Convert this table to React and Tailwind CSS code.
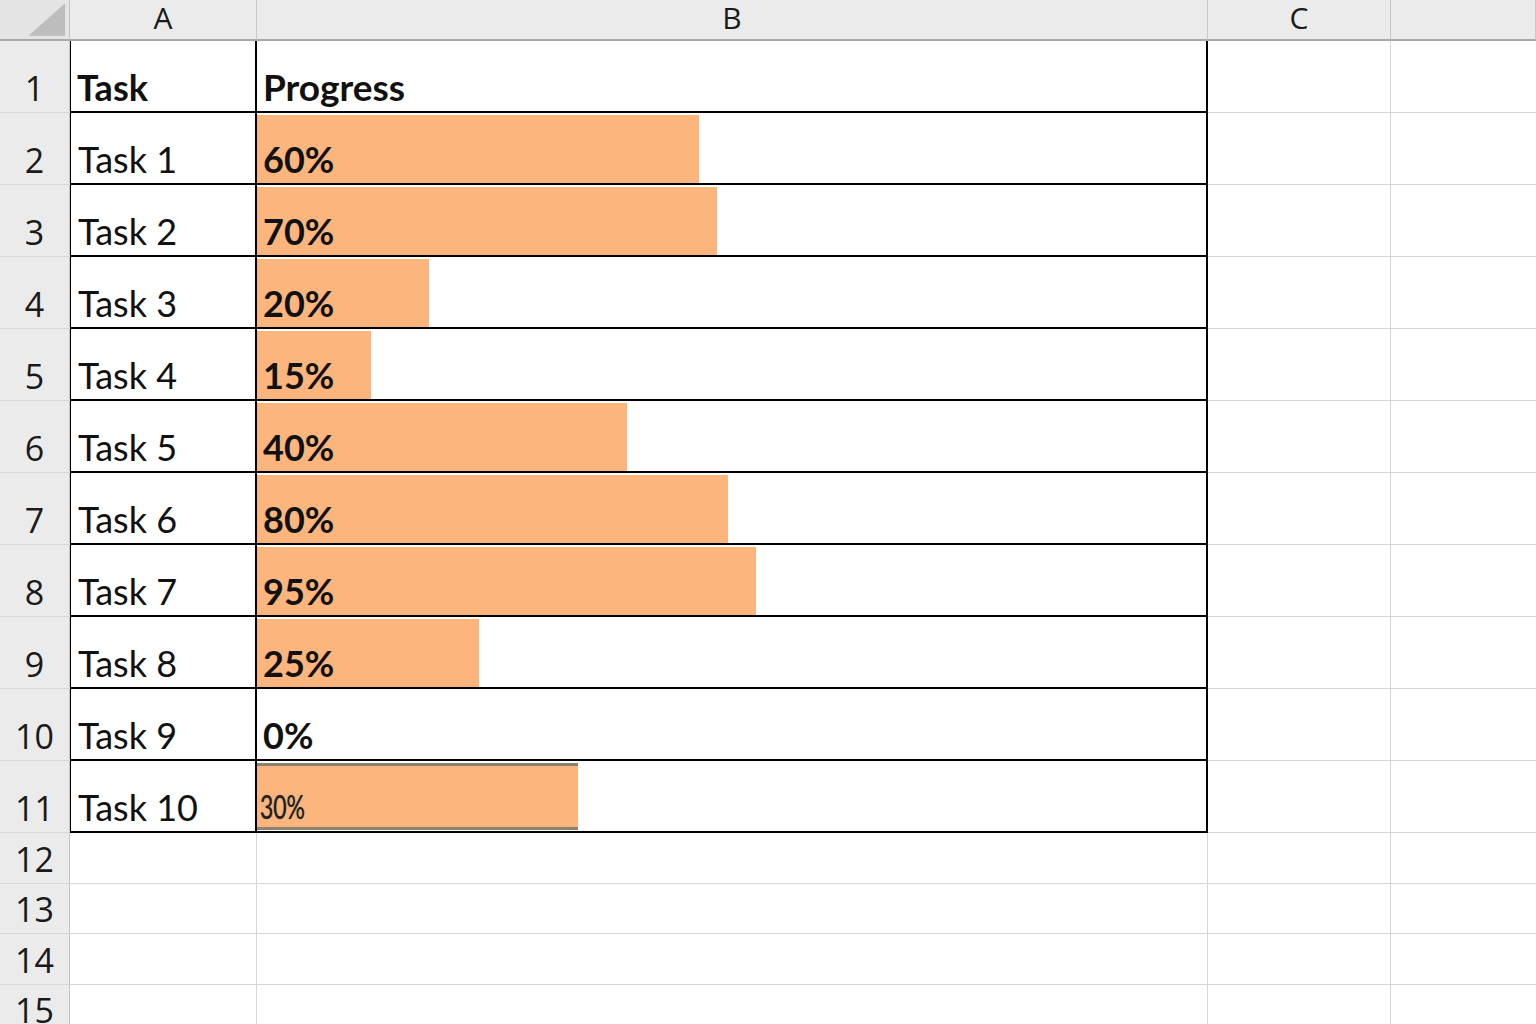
import React from "react";

const tasks = [
  { name: "Task 1", pct: "60%", bar: 442 },
  { name: "Task 2", pct: "70%", bar: 460 },
  { name: "Task 3", pct: "20%", bar: 172 },
  { name: "Task 4", pct: "15%", bar: 114 },
  { name: "Task 5", pct: "40%", bar: 370 },
  { name: "Task 6", pct: "80%", bar: 471 },
  { name: "Task 7", pct: "95%", bar: 499 },
  { name: "Task 8", pct: "25%", bar: 222 },
  { name: "Task 9", pct: "0%", bar: 0 },
  { name: "Task 10", pct: "30%", bar: 321, odd: true },
];

const headFont = { fontFamily: '"Open Sans", "Noto Sans", sans-serif' };
const cellFont = { fontFamily: 'Lato, "Open Sans", sans-serif' };

function RowHead({ n }) {
  return (
    <div
      style={headFont}
      className="flex justify-center items-end pb-[5px] bg-[#ebebeb] border-r border-r-[#c4c4c4] border-b border-b-[#d6d6d6] text-[34px] text-[#1a1a1a] leading-[1.1]"
    >
      {n}
    </div>
  );
}

function BarCell({ t }) {
  return (
    <div className="flex items-stretch border-r-2 border-r-black border-b-2 border-b-black">
      <div
        style={{ width: t.bar }}
        className={
          "flex items-end whitespace-nowrap " +
          (t.bar ? "bg-[#fbb57d] " : "") +
          (t.odd ? "border-y-[3px] border-[#8c8272] mt-[2px] mb-[1px]" : "mt-[2px]")
        }
      >
        {t.odd ? (
          <span
            style={cellFont}
            className="pl-[4px] pb-[3px] text-[32px] leading-[1.1] text-[#1f1f1f] origin-left scale-x-[0.72] inline-block [text-shadow:0_0_1px_#555]"
          >
            {t.pct}
          </span>
        ) : (
          <span style={cellFont} className="pl-[6px] pb-[3px] text-[36px] font-bold leading-[1.1] text-[#111]">
            {t.pct}
          </span>
        )}
      </div>
    </div>
  );
}

export default function App() {
  const empty = [12, 13, 14, 15];
  return (
    <div className="w-[1536px] h-[1024px] overflow-hidden bg-white">
      <div className="grid grid-cols-[70px_187px_951px_183px_1fr] grid-rows-[41px_repeat(11,72px)_51px_50px_51px_50px]">
        {/* column headers */}
        <div className="bg-[#e4e4e4] border-r border-r-[#c4c4c4] border-b-2 border-b-[#a8a8a8] flex">
          <svg width="70" height="39" viewBox="0 0 70 39">
            <polygon points="29,36 66,36 66,3" fill="#bdbdbd" />
          </svg>
        </div>
        {["A", "B", "C", ""].map((c, i) => (
          <div
            key={i}
            style={headFont}
            className="bg-[#ebebeb] border-r border-r-[#c6c6c6] border-b-2 border-b-[#a8a8a8] flex justify-center items-center pb-[4px] text-[30px] text-[#1a1a1a] leading-none"
          >
            {c}
          </div>
        ))}

        {/* row 1 */}
        <RowHead n={1} />
        <div className="flex items-end border-l border-l-black border-r-2 border-r-black border-b-2 border-b-black">
          <span style={cellFont} className="pl-[6px] pb-[3px] text-[36px] font-bold leading-[1.1] text-[#111]">
            Task
          </span>
        </div>
        <div className="flex items-end border-r-2 border-r-black border-b-2 border-b-black">
          <span style={cellFont} className="pl-[6px] pb-[3px] text-[37px] font-bold leading-[1.1] text-[#111]">
            Progress
          </span>
        </div>
        <div className="border-r border-r-[#d6d6d6] border-b border-b-[#d6d6d6]" />
        <div className="border-b border-b-[#d6d6d6]" />

        {tasks.map((t, i) => (
          <React.Fragment key={t.name}>
            <RowHead n={i + 2} />
            <div className="flex items-end border-l border-l-black border-r-2 border-r-black border-b-2 border-b-black">
              <span style={cellFont} className="pl-[7px] pb-[3px] text-[36px] leading-[1.1] text-[#111]">
                {t.name}
              </span>
            </div>
            <BarCell t={t} />
            <div className="border-r border-r-[#d6d6d6] border-b border-b-[#d6d6d6]" />
            <div className="border-b border-b-[#d6d6d6]" />
          </React.Fragment>
        ))}

        {empty.map((n) => (
          <React.Fragment key={n}>
            <RowHead n={n} />
            <div className="border-r border-r-[#d6d6d6] border-b border-b-[#d6d6d6]" />
            <div className="border-r border-r-[#d6d6d6] border-b border-b-[#d6d6d6]" />
            <div className="border-r border-r-[#d6d6d6] border-b border-b-[#d6d6d6]" />
            <div className="border-b border-b-[#d6d6d6]" />
          </React.Fragment>
        ))}
      </div>
    </div>
  );
}
